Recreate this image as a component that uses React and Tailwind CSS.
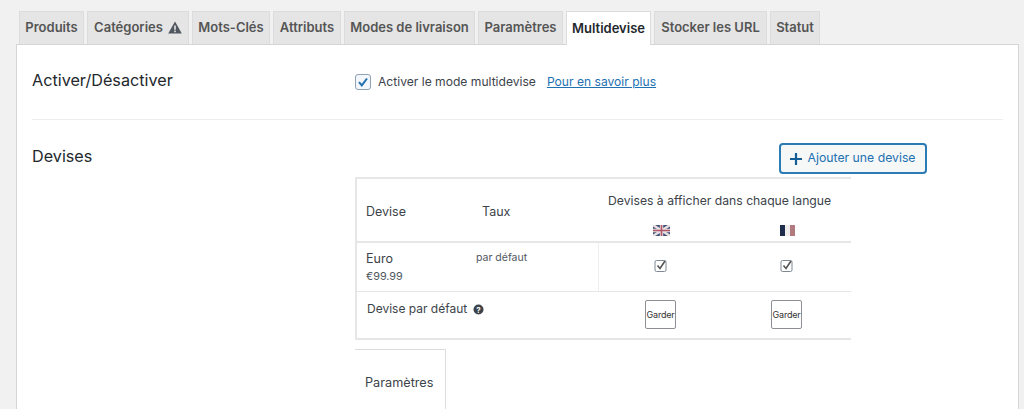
import React from "react";

const font = { fontFamily: '"Inter","Liberation Sans",sans-serif' };

const tabs = [
  ["Produits", "w-[65px]"],
  ["Catégories", "w-[102px]", true],
  ["Mots-Clés", "w-[78px]"],
  ["Attributs", "w-[68px]"],
  ["Modes de livraison", "w-[131px]"],
  ["Paramètres", "w-[85px]"],
  ["Multidevise", "w-[85px]", false, true],
  ["Stocker les URL", "w-[113px]"],
  ["Statut", "w-[50px]"],
];

function Warn() {
  return (
    <svg width="14" height="13" viewBox="0 0 14 13" className="ml-[5px] -mt-[1px]">
      <path d="M7 .5 13.8 12.5H.2Z" fill="#50575e" />
      <rect x="6.2" y="4.5" width="1.6" height="4.3" fill="#e5e5e5" />
      <rect x="6.2" y="9.6" width="1.6" height="1.6" fill="#e5e5e5" />
    </svg>
  );
}

function Tab({ label, w, warn, active }) {
  return (
    <div
      className={
        active
          ? `${w} h-[34px] -mb-px z-10 flex items-center justify-center border border-b-0 border-[#dcdcde] bg-white text-[13px] font-semibold text-[#23282d] whitespace-nowrap`
          : `${w} h-[33px] flex items-center justify-center border border-b-0 border-[#dcdcde] bg-[#e5e5e5] text-[13px] font-semibold text-[#555] whitespace-nowrap`
      }
    >
      {label}
      {warn && <Warn />}
    </div>
  );
}

function SmallCheck() {
  return (
    <svg width="14" height="14" viewBox="0 0 14 14">
      <rect x="1" y="1.5" width="11" height="11" rx="1.5" fill="none" stroke="#7e8993" strokeWidth="1" />
      <path d="M3.5 6.5 6 9.5 11 2" fill="none" stroke="#555" strokeWidth="1.6" />
    </svg>
  );
}

function Garder() {
  return (
    <div className="w-[31px] h-[29px] flex items-center justify-center border border-[#8c8f94] rounded-[2px] bg-white text-[9px] text-[#333] tracking-[-0.2px]">
      Garder
    </div>
  );
}

function UK() {
  return (
    <svg width="17" height="11" viewBox="0 0 17 11">
      <rect width="17" height="11" fill="#3f4f78" />
      <path d="M0 0 17 11M17 0 0 11" stroke="#e8e0e0" strokeWidth="2.4" />
      <path d="M8.5 0V11M0 5.5H17" stroke="#e8e0e0" strokeWidth="3.4" />
      <path d="M8.5 0V11M0 5.5H17" stroke="#b0566a" strokeWidth="1.6" />
    </svg>
  );
}

function FR() {
  return (
    <svg width="17" height="11" viewBox="0 0 17 11">
      <rect width="5" height="11" x="1" fill="#1f2d4d" />
      <rect width="5" height="11" x="6" fill="#f0eded" />
      <rect width="5" height="11" x="11" fill="#b07a7f" />
    </svg>
  );
}

export default function App() {
  return (
    <div style={font} className="w-[1024px] h-[409px] overflow-hidden bg-[#f1f1f1]">
      <div className="flex gap-[3px] pl-[19px] pt-[11px] relative">
        {tabs.map(([l, w, warn, active]) => (
          <Tab key={l} label={l} w={w} warn={warn} active={active} />
        ))}
      </div>
      <div className="ml-4 mr-[5px] h-[365px] bg-white border-l border-r border-t border-[#d5d5d5] px-[15px]">
        <div className="flex h-[75px] border-b border-[#eeeeee]">
          <div className="w-[323px] pt-[22px] text-[16.2px] leading-[26px] text-[#23282d]">Activer/Désactiver</div>
          <div className="flex items-start pt-[28px] text-[12.1px] leading-[18px] text-[#3c434a]">
            <span className="w-4 h-4 mr-[7px] mt-[1px] flex items-center justify-center rounded-[3px] border border-[#8fa3b5] bg-[#f3f6fa]">
              <svg width="12" height="12" viewBox="0 0 12 12">
                <path d="M2 6.2 4.8 9.4 10 2.5" fill="none" stroke="#2271b1" strokeWidth="2" />
              </svg>
            </span>
            Activer le mode multidevise
            <a className="ml-[11px] text-[#2271b1] underline">Pour en savoir plus</a>
          </div>
        </div>
        <div className="flex">
          <div className="w-[324px] pt-[23px] text-[16.2px] leading-[26px] text-[#23282d]">Devises</div>
          <div className="w-[650px]">
            <div className="flex justify-end pr-[76px] pt-[23px] h-[57px]">
              <button className="w-[148px] h-[31px] flex items-center justify-center gap-[5px] rounded-[4px] border-2 border-[#2b7bb5] bg-[#f6f7f7] text-[12.25px] text-[#2271b1]">
                <svg width="12" height="12" viewBox="0 0 12 12">
                  <path d="M6 0V12M0 6H12" stroke="#135e96" strokeWidth="2.2" />
                </svg>
                Ajouter une devise
              </button>
            </div>
            <div className="w-[496px] border-l-2 border-t-2 border-b-2 border-[#e6e6e6] text-[#3c434a]">
              <div className="flex h-[64px] border-b-2 border-[#e6e6e6]">
                <div className="w-[125px] pl-[9px] pt-[24px] text-[12.5px] leading-[18px]">Devise</div>
                <div className="w-[116px] pt-[24px] text-[12.5px] leading-[18px]">Taux</div>
                <div className="flex-1 pt-[13px] text-[12.2px] leading-[18px]">
                  <div className="pl-[10px] whitespace-nowrap">Devises à afficher dans chaque langue</div>
                  <div className="flex mt-[15px]">
                    <div className="w-[126px] pl-[55px]"><UK /></div>
                    <div className="w-[126px] pl-[55px]"><FR /></div>
                  </div>
                </div>
              </div>
              <div className="flex h-[49px] border-b border-[#e6e6e6]">
                <div className="w-[119px] pl-[9px] pt-[7px]">
                  <div className="text-[12.5px] leading-[18px]">Euro</div>
                  <div className="mt-[1px] text-[10.8px] leading-[16px] text-[#50575e]">€99.99</div>
                </div>
                <div className="w-[122px] pt-[7px] text-[10.5px] leading-[16px] text-[#50575e]">par défaut</div>
                <div className="flex-1 flex border-l border-[#eeeeee] pt-[16px]">
                  <div className="w-[126px] pl-[55px]"><SmallCheck /></div>
                  <div className="w-[126px] pl-[55px]"><SmallCheck /></div>
                </div>
              </div>
              <div className="flex h-[46px]">
                <div className="w-[241px] pl-[10px] pt-[8px] flex items-start text-[12px] leading-[18px]">
                  Devise par défaut
                  <svg width="11" height="11" viewBox="0 0 11 11" className="ml-[6px] mt-[4px]">
                    <circle cx="5.5" cy="5.5" r="5" fill="#3c434a" />
                    <text x="5.5" y="8.5" textAnchor="middle" fontSize="8" fontWeight="700" fill="#fff">?</text>
                  </svg>
                </div>
                <div className="flex-1 flex pt-[8px]">
                  <div className="w-[126px] pl-[47px]"><Garder /></div>
                  <div className="w-[126px] pl-[47px]"><Garder /></div>
                </div>
              </div>
            </div>
            <div className="mt-[9px] w-[91px] h-[70px] border-t border-r border-[#dddddd] pl-[10px] pt-[24px] text-[12.7px] leading-[18px] text-[#3c434a]">
              Paramètres
            </div>
          </div>
        </div>
      </div>
    </div>
  );
}
